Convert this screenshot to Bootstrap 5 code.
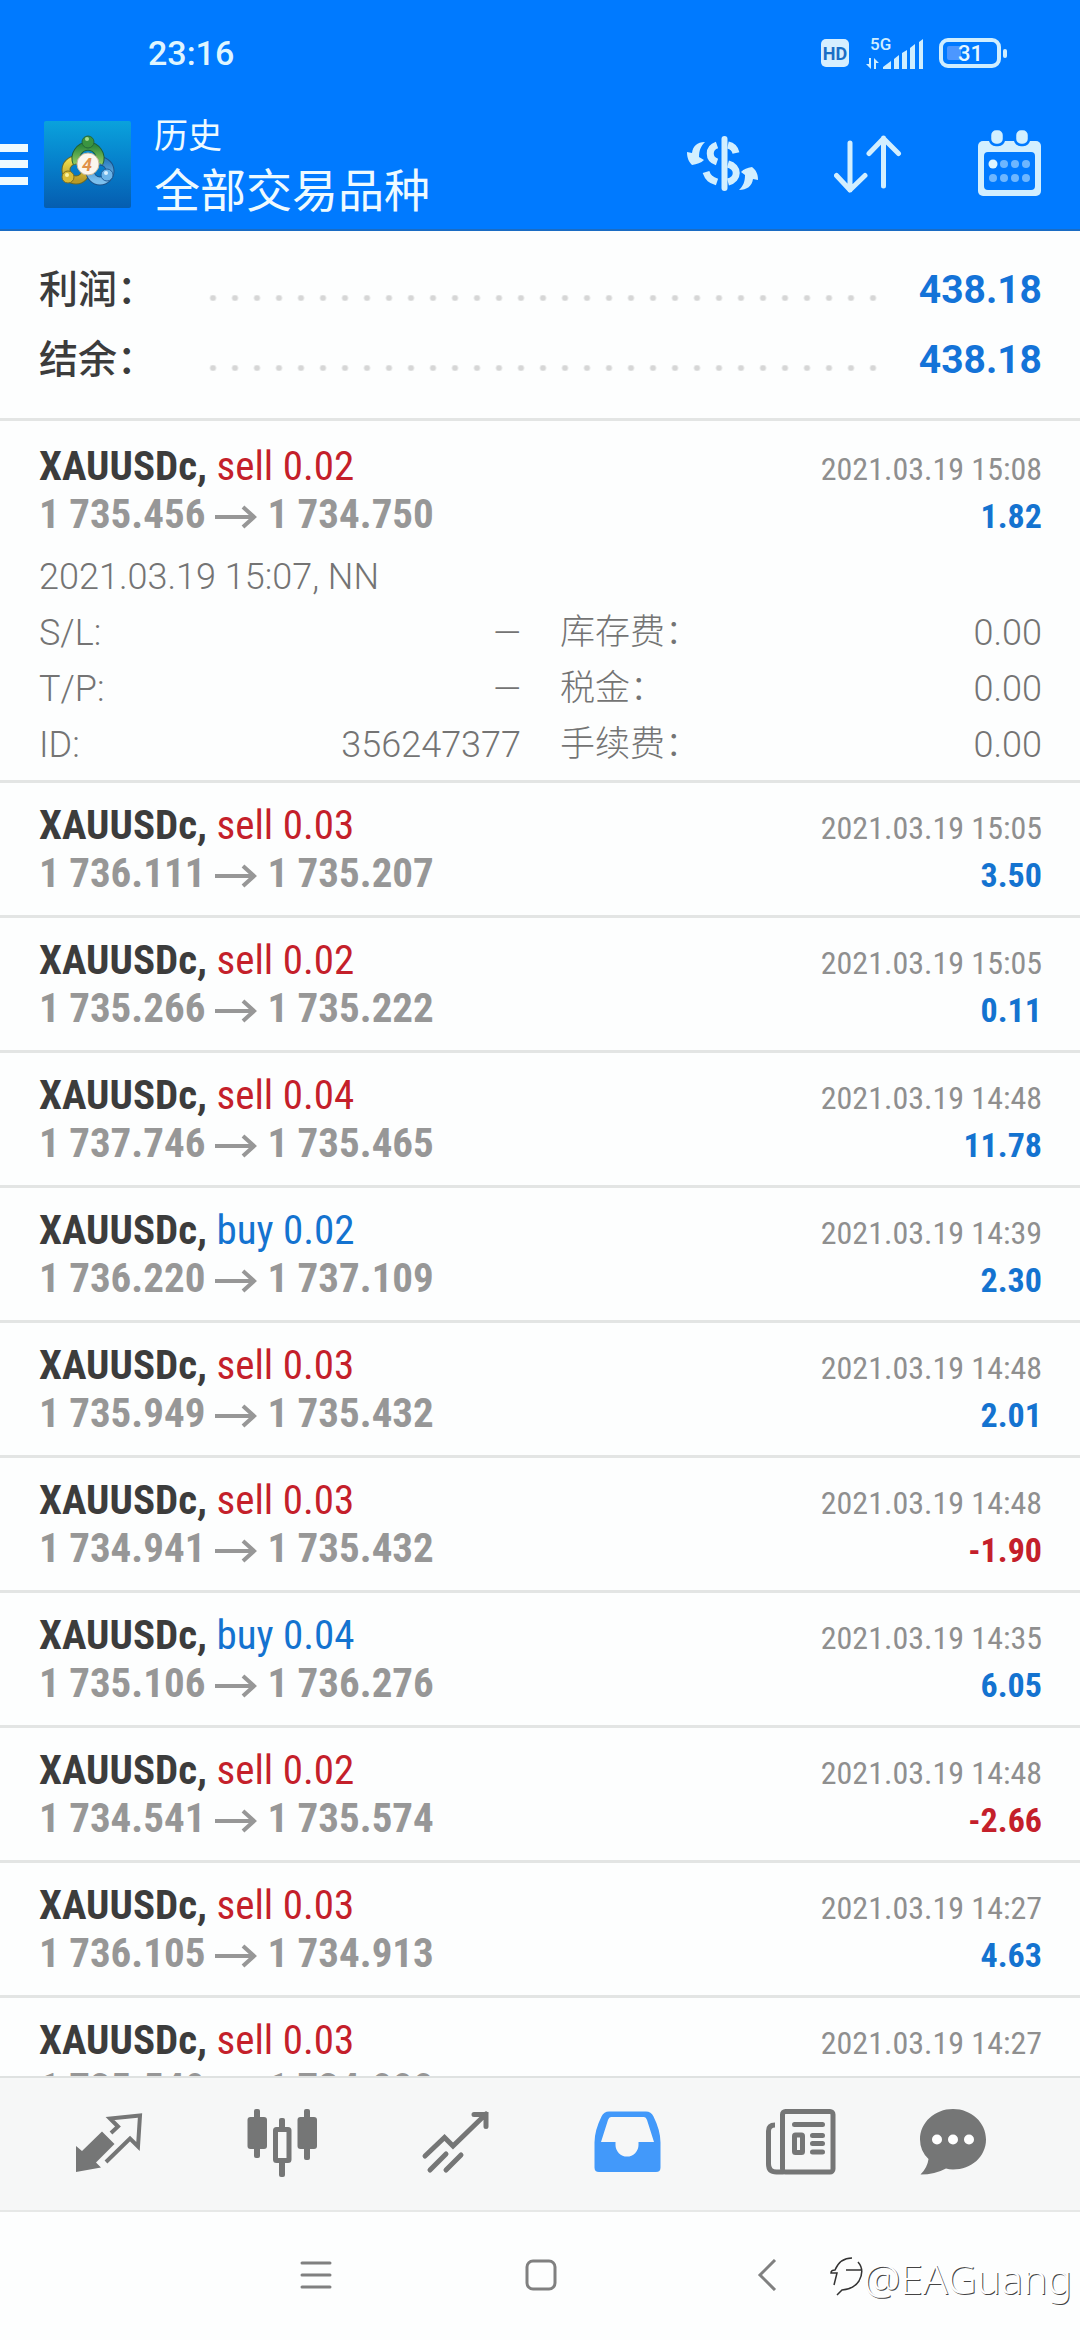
<!DOCTYPE html>
<html lang="zh-CN">
<head>
<meta charset="utf-8">
<meta name="viewport" content="width=device-width, initial-scale=1">
<title>历史 - 全部交易品种</title>
<link href="https://cdn.jsdelivr.net/npm/bootstrap@5.3.0/dist/css/bootstrap.min.css" rel="stylesheet">
<style>
  body { font-family: Roboto, "Noto Sans CJK SC", sans-serif; background: #fdfefe; color: #3c3c3c; }
  .screen { height: 100vh; }
  .topbar { background: #007aff; border-bottom: 2px solid #1a6cc4; color: #eefaff; }
  .statusbar { height: 106px; padding: 0 73px 0 148px; }
  .clock { font-size: 34px; line-height: 40px; font-weight: 500; color: #dff5ff; }
  .status-icons { color: #cfeeff; }
  .hd-mark { width: 28px; height: 28px; border-radius: 5px; background: #d6efff; color: #1b6fc6; font-size: 18px; line-height: 29px; font-weight: 700; margin-right: 16px; }
  .signal { margin-right: 14px; overflow: visible; }
  .appbar { height: 116px; padding-right: 38px; margin-bottom: 7px; }
  .plain-btn { border: 0; background: none; padding: 0; color: inherit; display: block; }
  .plain-btn svg, .status-icons svg { display: block; }
  .burger { margin-right: 16px; }
  .app-logo { margin-right: 23px; display: block; }
  .titles { padding-top: 3px; }
  .title-sub { font-size: 34px; line-height: 50px; }
  .title-main { font-size: 46px; line-height: 60px; }
  .actions { gap: 76px; color: #d2efff; }

  .totals { padding: 24px 38px 23px 39px; border-bottom: 3px solid #e3e5e4; }
  .total-line { height: 70px; line-height: 70px; }
  .total-name { font-size: 39px; font-weight: 500; width: 163px; }
  .total-sum { font-size: 39px; font-weight: 700; color: #1473d8; width: 158px; }
  .leader { height: 6px; margin-top: 16px; background: radial-gradient(circle, #d6d6d6 2px, transparent 4px) repeat-x 0 0 / 22px 6px; }

  .deals { overflow: hidden; min-height: 0; font-family: "Roboto Condensed", Roboto, sans-serif; padding-top: 3px; }
  .deal { padding: 18px 38px 18px 39px; border-bottom: 3px solid #e3e5e4; }
  .deal-head, .deal-body { height: 48px; line-height: 48px; font-size: 41px; }
  .deal-head b, .deal-body b { font-weight: 700; }
  .deal-body { color: #979797; }
  .deal-time { font-size: 32px; line-height: 40px; color: #8f8f8f; }
  .deal-sum { font-size: 34px; line-height: 40px; font-weight: 700; }
  .c-sell, .c-loss { color: #c4202a; }
  .c-buy, .c-gain { color: #1473d0; }
  .arrow { margin: 0 10px; }
  .expanded { padding-bottom: 7px; }
  .details { font-family: Roboto, "Noto Sans CJK SC", sans-serif; font-weight: 300; font-size: 36px; line-height: 56px; color: #747474; padding-top: 11px; }
  .details .zh { font-size: 35px; }
  .cell-left { width: 482px; margin-right: 39px; }

  .tabs { background: #f6f7f7; border-top: 2px solid #dfe2e1; border-bottom: 2px solid #e6e8e7; height: 136px; padding: 0 62px 3px 22px; color: #757676; }
  .tab-btn { flex: 173 1 0; }
  .tab-btn:last-child { flex-grow: 130; }
  .tab-btn svg { margin: 0 auto; }
  .tab-btn.active { color: #4299fa; }
  .sysnav { height: 128px; gap: 193px; color: #808080; padding: 0 0 3px 2px; }
  .watermark { right: 8px; bottom: 34px; font-family: "Noto Sans", sans-serif; font-size: 41px; line-height: 56px; font-weight: 300; color: #fff; text-shadow: 1px 1px 0 #444; }
  .watermark svg { display: block; }
</style>
</head>
<body>
<div class="screen d-flex flex-column position-relative">

  <header class="topbar flex-shrink-0">
    <div class="statusbar d-flex align-items-center justify-content-between">
      <span class="clock">23:16</span>
      <div class="status-icons d-flex align-items-center">
        <span class="hd-mark text-center">HD</span>
        <svg class="signal" width="60" height="34" viewBox="864 35 60 34" fill="currentColor">
          <text x="869" y="49" font-size="17" font-family="Roboto" font-weight="500">5G</text>
          <path d="M870 57v11l-5-5h3v-6zM873 68V57l5 5h-3v6z"/>
          <path d="M882 68v-2l8-6v8zM893 68V58l5-4v14zM901 68V52l5-3v19zM909 68V47l5-4v25zM918 68V41l4-3v30z"/>
        </svg>
        <svg width="68" height="30" viewBox="938 39 68 30">
          <rect x="940" y="41" width="58" height="26" rx="7" fill="none" stroke="currentColor" stroke-width="4"/>
          <rect x="946" y="47" width="14" height="14" rx="2" fill="#4c97ff"/>
          <rect x="1002" y="50" width="4" height="9" rx="2" fill="currentColor"/>
          <text x="957" y="62" font-size="22" font-family="Roboto" font-weight="500" fill="#e6f8ff">31</text>
        </svg>
      </div>
    </div>
    <div class="appbar d-flex align-items-center">
      <button class="plain-btn burger" type="button" aria-label="菜单">
        <svg width="28" height="42" viewBox="0 0 28 42" fill="#eefaff"><path d="M0 1h28v8H0zM0 17h28v8H0zM0 34h28v8H0z"/></svg>
      </button>
      <svg class="app-logo" width="87" height="87" viewBox="0 0 87 87">
        <defs>
          <linearGradient id="bg" x1="0" y1="0" x2="0" y2="1"><stop offset="0" stop-color="#0aa2dc"/><stop offset=".5" stop-color="#067fcb"/><stop offset="1" stop-color="#055db0"/></linearGradient>
          <linearGradient id="gr" x1="0" y1="0" x2="0" y2="1"><stop offset="0" stop-color="#2f8a3c"/><stop offset="1" stop-color="#8cc860"/></linearGradient>
          <linearGradient id="ye" x1="0" y1="0" x2="0" y2="1"><stop offset="0" stop-color="#eedc4c"/><stop offset="1" stop-color="#b99a28"/></linearGradient>
          <linearGradient id="bl" x1="0" y1="0" x2="0" y2="1"><stop offset="0" stop-color="#2f7fc0"/><stop offset="1" stop-color="#7cc0ee"/></linearGradient>
        </defs>
        <rect width="87" height="87" rx="2" fill="url(#bg)"/>
        <circle cx="32" cy="49" r="10" fill="none" stroke="#6b6a25" stroke-width="9"/>
        <circle cx="32" cy="49" r="10" fill="none" stroke="url(#ye)" stroke-width="7"/>
        <circle cx="56" cy="50" r="10" fill="none" stroke="#1d5288" stroke-width="9"/>
        <circle cx="56" cy="50" r="10" fill="none" stroke="url(#bl)" stroke-width="7"/>
        <path d="M33 42a12 12 0 1 1 22 0" fill="none" stroke="#1f5f38" stroke-width="9"/>
        <path d="M33 42a12 12 0 1 1 22 0" fill="none" stroke="url(#gr)" stroke-width="7"/>
        <circle cx="44" cy="21" r="6" fill="#3a9440" stroke="#25683a"/><circle cx="43" cy="18" r="2" fill="#a6dc8c"/>
        <circle cx="24" cy="56" r="6" fill="#d8bc38" stroke="#7d7022"/><circle cx="23" cy="54" r="2" fill="#fbf2a0"/>
        <circle cx="63" cy="54" r="6" fill="#6cb4e8" stroke="#22609c"/><circle cx="62" cy="52" r="2" fill="#d8f0ff"/>
        <circle cx="44" cy="43" r="11" fill="#fbf6ee" stroke="#c9b99a"/>
        <text x="43" y="50" text-anchor="middle" font-size="18" font-style="italic" font-weight="700" font-family="Roboto" fill="#e0914a">4</text>
      </svg>
      <div class="titles me-auto">
        <div class="title-sub">历史</div>
        <div class="title-main">全部交易品种</div>
      </div>
      <div class="actions d-flex">
        <button class="plain-btn" type="button" aria-label="交易品种">
          <svg width="72" height="68" viewBox="686 130 72 68" fill="none" stroke="currentColor" stroke-width="6">
            <path d="M724.5 139v49" stroke-linecap="round"/>
            <path d="M717 145c-9 3-9 14 0 17M728 145c5 1 7 4 8 8M706 172c2 6 5 8 11 10M728 164c11 3 11 15 0 18" stroke-width="7"/>
            <path d="M705 142c-8 0-12 4-13 11l-5-1c0 6 2 10 5 13 5-1 9-2 12-5l-5-3c0-7 2-11 6-15zM739 190c8 0 13-4 14-11l5 1c0-6-2-10-6-13-5 1-8 2-11 5l4 3c0 7-2 11-6 15z" fill="currentColor" stroke="none"/>
          </svg>
        </button>
        <button class="plain-btn" type="button" aria-label="排序">
          <svg width="68" height="68" viewBox="832 130 68 68" fill="none" stroke="currentColor" stroke-width="5" stroke-linecap="round" stroke-linejoin="round">
            <path d="M848 143v47M834.500 175.500l13.500 14.500 15-14.500M881.500 186v-48M867 153.500l14.500-15 15 15"/>
          </svg>
        </button>
        <button class="plain-btn" type="button" aria-label="日期">
          <svg width="64" height="68" viewBox="977 130 64 68">
            <rect x="977" y="141" width="63" height="55" rx="5" fill="currentColor"/>
            <rect x="983" y="152" width="51" height="38" rx="4" fill="#007aff"/>
            <g fill="currentColor" stroke="#007aff" stroke-width="2.500"><rect x="989" y="129" width="14" height="16" rx="6"/><rect x="1014" y="129" width="14" height="16" rx="6"/></g>
            <circle cx="992" cy="164" r="4.500" fill="#dff6ff"/>
            <g fill="#6db6ff"><circle cx="1003" cy="164" r="4"/><circle cx="1014" cy="164" r="4"/><circle cx="1025" cy="164" r="4"/><circle cx="992" cy="178" r="4"/><circle cx="1003" cy="178" r="4"/><circle cx="1014" cy="178" r="4"/><circle cx="1025" cy="178" r="4"/></g>
          </svg>
        </button>
      </div>
    </div>
  </header>

  <section class="totals flex-shrink-0">
    <div class="total-line d-flex align-items-center"><span class="total-name">利润：</span><span class="leader flex-grow-1"></span><span class="total-sum text-end">438.18</span></div>
    <div class="total-line d-flex align-items-center"><span class="total-name">结余：</span><span class="leader flex-grow-1"></span><span class="total-sum text-end">438.18</span></div>
  </section>

  <svg class="d-none"><symbol id="to" viewBox="0 0 42 24"><path d="M0 12h39M28 2l11 10-11 10" fill="none" stroke="#979797" stroke-width="4"/></symbol></svg>

  <main class="deals flex-grow-1">
    <article class="deal expanded">
      <div class="deal-head d-flex justify-content-between align-items-baseline"><span><b>XAUUSDc,</b> <span class="c-sell">sell 0.02</span></span><span class="deal-time">2021.03.19 15:08</span></div>
      <div class="deal-body d-flex justify-content-between align-items-baseline"><b>1 735.456<svg class="arrow" width="42" height="24"><use href="#to"/></svg>1 734.750</b><span class="deal-sum c-gain">1.82</span></div>
      <div class="details">
        <div>2021.03.19 15:07, NN</div>
        <div class="d-flex"><div class="cell-left d-flex justify-content-between"><span>S/L:</span><span>—</span></div><span class="zh me-auto">库存费：</span><span>0.00</span></div>
        <div class="d-flex"><div class="cell-left d-flex justify-content-between"><span>T/P:</span><span>—</span></div><span class="zh me-auto">税金：</span><span>0.00</span></div>
        <div class="d-flex"><div class="cell-left d-flex justify-content-between"><span>ID:</span><span>356247377</span></div><span class="zh me-auto">手续费：</span><span>0.00</span></div>
      </div>
    </article>
    <article class="deal">
      <div class="deal-head d-flex justify-content-between align-items-baseline"><span><b>XAUUSDc,</b> <span class="c-sell">sell 0.03</span></span><span class="deal-time">2021.03.19 15:05</span></div>
      <div class="deal-body d-flex justify-content-between align-items-baseline"><b>1 736.111<svg class="arrow" width="42" height="24"><use href="#to"/></svg>1 735.207</b><span class="deal-sum c-gain">3.50</span></div>
    </article>
    <article class="deal">
      <div class="deal-head d-flex justify-content-between align-items-baseline"><span><b>XAUUSDc,</b> <span class="c-sell">sell 0.02</span></span><span class="deal-time">2021.03.19 15:05</span></div>
      <div class="deal-body d-flex justify-content-between align-items-baseline"><b>1 735.266<svg class="arrow" width="42" height="24"><use href="#to"/></svg>1 735.222</b><span class="deal-sum c-gain">0.11</span></div>
    </article>
    <article class="deal">
      <div class="deal-head d-flex justify-content-between align-items-baseline"><span><b>XAUUSDc,</b> <span class="c-sell">sell 0.04</span></span><span class="deal-time">2021.03.19 14:48</span></div>
      <div class="deal-body d-flex justify-content-between align-items-baseline"><b>1 737.746<svg class="arrow" width="42" height="24"><use href="#to"/></svg>1 735.465</b><span class="deal-sum c-gain">11.78</span></div>
    </article>
    <article class="deal">
      <div class="deal-head d-flex justify-content-between align-items-baseline"><span><b>XAUUSDc,</b> <span class="c-buy">buy 0.02</span></span><span class="deal-time">2021.03.19 14:39</span></div>
      <div class="deal-body d-flex justify-content-between align-items-baseline"><b>1 736.220<svg class="arrow" width="42" height="24"><use href="#to"/></svg>1 737.109</b><span class="deal-sum c-gain">2.30</span></div>
    </article>
    <article class="deal">
      <div class="deal-head d-flex justify-content-between align-items-baseline"><span><b>XAUUSDc,</b> <span class="c-sell">sell 0.03</span></span><span class="deal-time">2021.03.19 14:48</span></div>
      <div class="deal-body d-flex justify-content-between align-items-baseline"><b>1 735.949<svg class="arrow" width="42" height="24"><use href="#to"/></svg>1 735.432</b><span class="deal-sum c-gain">2.01</span></div>
    </article>
    <article class="deal">
      <div class="deal-head d-flex justify-content-between align-items-baseline"><span><b>XAUUSDc,</b> <span class="c-sell">sell 0.03</span></span><span class="deal-time">2021.03.19 14:48</span></div>
      <div class="deal-body d-flex justify-content-between align-items-baseline"><b>1 734.941<svg class="arrow" width="42" height="24"><use href="#to"/></svg>1 735.432</b><span class="deal-sum c-loss">-1.90</span></div>
    </article>
    <article class="deal">
      <div class="deal-head d-flex justify-content-between align-items-baseline"><span><b>XAUUSDc,</b> <span class="c-buy">buy 0.04</span></span><span class="deal-time">2021.03.19 14:35</span></div>
      <div class="deal-body d-flex justify-content-between align-items-baseline"><b>1 735.106<svg class="arrow" width="42" height="24"><use href="#to"/></svg>1 736.276</b><span class="deal-sum c-gain">6.05</span></div>
    </article>
    <article class="deal">
      <div class="deal-head d-flex justify-content-between align-items-baseline"><span><b>XAUUSDc,</b> <span class="c-sell">sell 0.02</span></span><span class="deal-time">2021.03.19 14:48</span></div>
      <div class="deal-body d-flex justify-content-between align-items-baseline"><b>1 734.541<svg class="arrow" width="42" height="24"><use href="#to"/></svg>1 735.574</b><span class="deal-sum c-loss">-2.66</span></div>
    </article>
    <article class="deal">
      <div class="deal-head d-flex justify-content-between align-items-baseline"><span><b>XAUUSDc,</b> <span class="c-sell">sell 0.03</span></span><span class="deal-time">2021.03.19 14:27</span></div>
      <div class="deal-body d-flex justify-content-between align-items-baseline"><b>1 736.105<svg class="arrow" width="42" height="24"><use href="#to"/></svg>1 734.913</b><span class="deal-sum c-gain">4.63</span></div>
    </article>
    <article class="deal">
      <div class="deal-head d-flex justify-content-between align-items-baseline"><span><b>XAUUSDc,</b> <span class="c-sell">sell 0.03</span></span><span class="deal-time">2021.03.19 14:27</span></div>
      <div class="deal-body d-flex justify-content-between align-items-baseline"><b>1 735.549<svg class="arrow" width="42" height="24"><use href="#to"/></svg>1 734.000</b></div>
    </article>
  </main>

  <nav class="tabs d-flex align-items-center flex-shrink-0">
    <button class="plain-btn tab-btn" type="button" aria-label="行情">
      <svg width="76" height="76" viewBox="71 2104 76 76"><path d="M102 2130.500l12.500 12.500-18.500 18.500 5 5-25 4.500v-26l6 5z" fill="currentColor"/><path d="M111 2132l7-6.500-8-8 30-3-2 31-8-8-24 23.500" fill="none" stroke="currentColor" stroke-width="4"/></svg>
    </button>
    <button class="plain-btn tab-btn" type="button" aria-label="图表">
      <svg width="76" height="76" viewBox="243 2104 76 76"><g fill="currentColor"><rect x="246.500" y="2116" width="19.500" height="32" rx="3"/><rect x="253" y="2108" width="6" height="49" rx="2"/><rect x="296.500" y="2116" width="19.500" height="32" rx="3"/><rect x="303" y="2108" width="6" height="51" rx="2"/><rect x="278" y="2117" width="6" height="12" rx="2"/><rect x="278" y="2160" width="6" height="16" rx="2"/></g><rect x="274.500" y="2128.500" width="13.500" height="31" rx="1" fill="none" stroke="currentColor" stroke-width="5"/></svg>
    </button>
    <button class="plain-btn tab-btn" type="button" aria-label="交易">
      <svg width="76" height="76" viewBox="416 2104 76 76" fill="none" stroke="currentColor" stroke-width="5" stroke-linecap="round"><path d="M424 2155l19.500-18.500 8.500 8.500 33-32M473 2113.500h12v12M429 2169l16-16M445 2169l15-15"/></svg>
    </button>
    <button class="plain-btn tab-btn active" type="button" aria-label="历史">
      <svg width="76" height="76" viewBox="590 2104 76 76"><path fill="currentColor" fill-rule="evenodd" d="M609 2110.500h37q5 0 7.500 5 7 14 7 26v25q0 4.500-4.500 4.500h-57q-4.500 0-4.500-4.500v-25q0-12 7-26 2.500-5 7.500-5zM611 2116q-2 0-3 3l-7 22h14.500v3a11.500 11.500 0 0 0 23 0v-3H654l-7-22q-1-3-3-3z"/></svg>
    </button>
    <button class="plain-btn tab-btn" type="button" aria-label="新闻">
      <svg width="76" height="76" viewBox="763 2104 76 76" fill="none" stroke="currentColor" stroke-width="5"><rect x="782.500" y="2110.500" width="50.500" height="60.500" rx="3"/><path d="M775 2124q-6.500 0-6.500 6v33q0 8 8 8h7"/><path d="M794.500 2123.500h28M812.500 2134.500h10M812.500 2142.500h10M812.500 2151h10" stroke-linecap="round"/><rect x="794.500" y="2134" width="8" height="17.500" rx="1"/></svg>
    </button>
    <button class="plain-btn tab-btn" type="button" aria-label="消息">
      <svg width="76" height="76" viewBox="915 2104 76 76"><path fill="currentColor" d="M953 2108c18.500 0 33 13.500 33 30.500s-14.500 30-33 30q-4 0-7-1-11 6-25.500 6 7-7 8-15.500-8.500-8-8.500-19.500c0-17 14.500-30.500 33-30.500z"/><g fill="#fff"><circle cx="937" cy="2138.500" r="5"/><circle cx="953" cy="2138.500" r="5"/><circle cx="969" cy="2138.500" r="5"/></g></svg>
    </button>
  </nav>

  <div class="sysnav d-flex align-items-center justify-content-center flex-shrink-0">
    <button class="plain-btn" type="button" aria-label="最近任务"><svg width="32" height="32" viewBox="0 0 32 32" stroke="currentColor" stroke-width="3" stroke-linecap="round"><path d="M2 4h28M2 16h28M2 28h28"/></svg></button>
    <button class="plain-btn" type="button" aria-label="主屏幕"><svg width="32" height="32" viewBox="0 0 32 32" fill="none" stroke="currentColor" stroke-width="3"><rect x="2" y="2" width="28" height="28" rx="6"/></svg></button>
    <button class="plain-btn" type="button" aria-label="返回"><svg width="32" height="32" viewBox="0 0 32 32" fill="none" stroke="currentColor" stroke-width="3"><path d="M25 1L10 16l15 15"/></svg></button>
  </div>

  <div class="watermark position-absolute d-flex align-items-center">
    <svg width="34" height="42" viewBox="0 0 34 42" fill="none" stroke="#333" stroke-width="1.500"><path d="M4 28l3-12H1q0-3 4-3Q10 1 22 1M16 13h15M28 5q7 8 1 19-5 8-17 9l-5 5"/></svg>
    <span>@EAGuang</span>
  </div>
</div>
<script src="https://cdn.jsdelivr.net/npm/bootstrap@5.3.0/dist/js/bootstrap.bundle.min.js"></script>
</body>
</html>
